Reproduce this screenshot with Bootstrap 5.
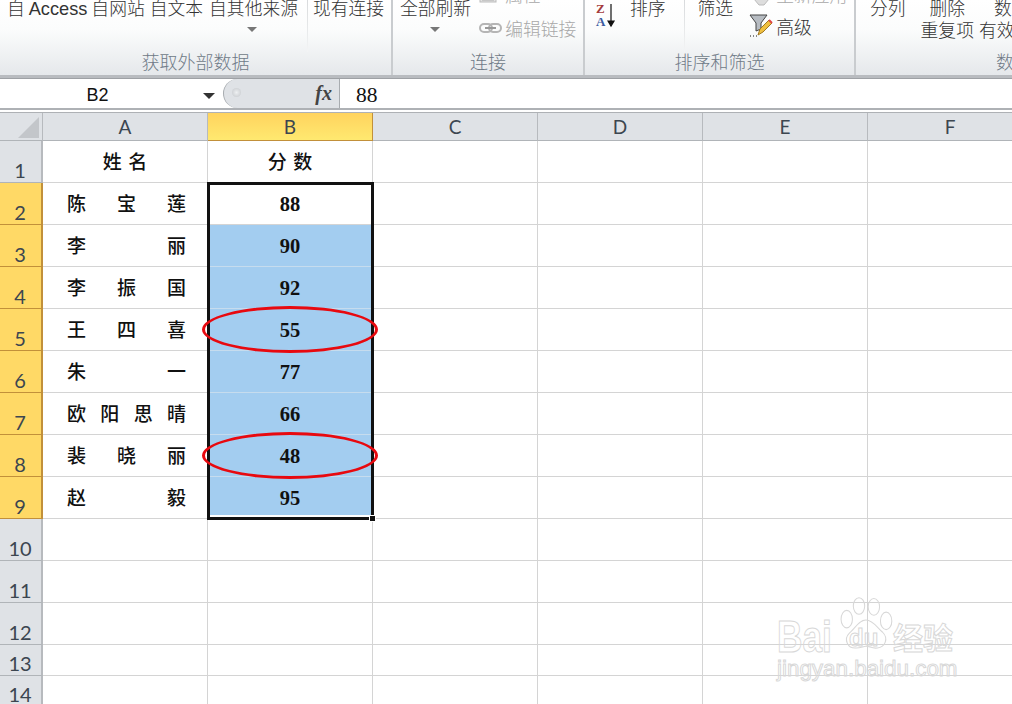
<!DOCTYPE html>
<html lang="zh"><head><meta charset="utf-8"><title>Excel</title>
<link href="https://cdn.jsdelivr.net/npm/bootstrap@5.3.0/dist/css/bootstrap.min.css" rel="stylesheet">
<style>
html,body{width:1012px;height:704px;overflow:hidden;background:#fff}
body{font-family:"Noto Sans CJK SC","Liberation Sans",sans-serif;position:relative;color:#222}
.ribbon{height:75px;overflow:hidden;background:linear-gradient(#fff 0,#fbfcfc 30px,#e5e8eb 75px)}
.rgroup{height:75px;border-right:2px solid #c9cccf;flex:none;position:relative}
.g1{width:393px}.g2{width:192px}.g3{width:271px}
.rbody{height:54px;margin-top:-5px;font-size:17.8px;line-height:24px;color:#333;font-weight:300}
.rlabel{font-size:18px;line-height:24px;color:#6f7a87;text-align:center;font-weight:300}
.rsep{width:1px;height:52px;margin-top:5px;background:linear-gradient(#d8dadc,#f3f4f5);flex:none}
.ritem{white-space:nowrap;flex:none}
.rdis{color:#a8a8a8}
.latin{font-family:"Liberation Sans",sans-serif;font-size:18.2px}
.caret-s{width:0;height:0;border-left:5px solid transparent;border-right:5px solid transparent;border-top:5px solid #777;display:block}
.stack2{margin-top:-13px}
.stack3{padding-top:1px;line-height:22px}
.line-up{height:34px}
.line-sm{height:22px}
.band{height:4px;background:#b9bcc0;border-bottom:1px solid #9ea1a5}
.fbar{height:29px;background:#fff}
.namebox{width:223px;position:relative;text-align:center;padding-right:28px;font-family:"Liberation Sans",sans-serif;font-size:18px;line-height:33px;color:#111}
.namecaret{position:absolute;right:8px;top:14px;border-left:6px solid transparent;border-right:6px solid transparent;border-top:6px solid #333}
.fxpill{width:117px;background:#dfe2e6;border:solid #a8acb0;border-width:0 1px 0 1px;border-radius:15px 0 0 15px;position:relative}
.fxdot{position:absolute;left:8px;top:9px;width:9px;height:9px;border-radius:50%;background:radial-gradient(#eef0f2,#c3c6ca)}
.fxtxt{position:absolute;right:7px;top:0;font-family:"Liberation Serif",serif;font-style:italic;font-weight:700;font-size:20px;line-height:29px;color:#444}
.fval{padding-left:16px;font-family:"Liberation Serif",serif;font-size:21.5px;line-height:32px;color:#111}
.band2{height:5px;background:linear-gradient(#aeb1b5 0,#aeb1b5 2px,#fff 2px,#fff 4px,#aeb1b5 4px)}
.sheet{display:grid;grid-template-columns:43px repeat(6,165px);grid-template-rows:28px repeat(12,42px) 31px 31px;position:relative;height:592px;overflow:hidden;width:1012px}
.hc{background:#dfe2e6;border-right:1px solid #b7babe;border-bottom:1px solid #b0b4b8;font-family:Lato,"Liberation Sans",sans-serif;font-size:19px;line-height:27px;text-align:center;color:#3c4650}
.hsel{background:linear-gradient(#ffd35e,#ffe970);border-right:1px solid #c2903a;border-bottom:1px solid #c2903a}
.rh{background:#dfe2e6;border-right:2px solid #b7babe;border-bottom:1px solid #b0b4b8;font-family:Lato,"Liberation Sans",sans-serif;font-size:20px;color:#3c4650;display:flex;align-items:flex-end;justify-content:center;line-height:24px;padding-right:1px}
.rhs{background:#ffd966;border-right-color:#c2903a;border-bottom-color:#c2903a}
.gc{border-right:1px solid #d4d4d4;border-bottom:1px solid #d4d4d4;background:#fff;min-width:0}
.tc{font-family:"Liberation Serif","Noto Sans CJK SC",serif;font-size:19px;color:#111;display:flex;align-items:center;line-height:1;padding-top:2px}
.nm{padding-left:24px;padding-right:21px;justify-content:space-between;font-weight:500}
.hd{justify-content:center;letter-spacing:6.5px;padding-left:6.5px;font-weight:500}
.sc{justify-content:center;font-size:20.5px;font-weight:700}
.blue{background:#a3cdf0;border-bottom-color:#c6dcee}
.blue-last{background:linear-gradient(#a3cdf0 0,#a3cdf0 38px,#fff 38px)}
.corner{width:0;height:0;border-left:21px solid transparent;border-bottom:21px solid #c3c6ca;position:absolute;left:18px;top:4px}
.selbox{position:absolute;left:207px;top:69px;width:167px;height:338px;border:3px solid #111}
.handle{position:absolute;left:369px;top:515px;width:7px;height:7px;background:#111;border:1px solid #fff}
.oval{position:absolute;left:202px;width:176px;height:47px;border:3px solid #e8090f;border-radius:50%}
.wm{position:absolute;left:770px;top:590px;width:195px;height:100px}
.wmt{position:absolute;color:transparent;-webkit-text-stroke:1px #d8d8d8;font-family:"Liberation Sans",sans-serif;font-weight:700;white-space:nowrap;line-height:1}
.wbai{left:7px;top:29px;font-size:44px;line-height:.8;transform:scaleX(.8);transform-origin:left}
.wdu{left:79px;top:36px;font-size:24px}
.wjing{left:7px;top:68px;font-size:22.4px;font-weight:400}
.wcn{left:123px;top:31px;font-size:30px;font-family:"Noto Sans CJK SC",sans-serif}
.wpaw{position:absolute;left:68px;top:4px}
</style></head><body>
<div class="ribbon d-flex">
  <div class="rgroup g1">
    <div class="rbody d-flex">
      <span class="ritem" style="margin-left:7px">自 <span class="latin">Access</span></span><span class="ritem" style="margin-left:4px">自网站</span><span class="ritem" style="margin-left:5px">自文本</span>
      <div class="ritem" style="margin-left:6px"><div>自其他来源</div><span class="caret-s" style="margin:8px 0 0 38px"></span></div>
      <div class="rsep" style="margin-left:9px"></div>
      <span class="ritem" style="margin-left:5px">现有连接</span>
    </div>
    <div class="rlabel">获取外部数据</div>
  </div>
  <div class="rgroup g2">
    <div class="rbody d-flex">
      <div class="ritem" style="margin-left:7px"><div>全部刷新</div><span class="caret-s" style="margin:8px 0 0 30px"></span></div>
      <div class="ritem stack2" style="margin-left:8px">
        <div class="d-flex align-items-end rdis line-up"><svg width="18" height="18" style="margin:0 8px 9px 0" viewBox="0 0 18 18"><rect x="1" y="0" width="16" height="13" fill="#e4e4e4" stroke="#bbb"/><path d="M3 11h12" stroke="#aaa"/></svg><span style="margin-bottom:10px">属性</span></div>
        <div class="d-flex align-items-center rdis"><svg width="23" height="12" style="margin-right:3px" viewBox="0 0 23 12"><rect x="1" y="2" width="12" height="8" rx="4" fill="none" stroke="#b5b5b5" stroke-width="2"/><rect x="10" y="2" width="12" height="8" rx="4" fill="none" stroke="#b5b5b5" stroke-width="2"/><path d="M6 6h11" stroke="#999" stroke-width="2"/></svg>编辑链接</div>
      </div>
    </div>
    <div class="rlabel">连接</div>
  </div>
  <div class="rgroup g3">
    <div class="rbody d-flex">
      <svg class="ritem" width="22" height="30" viewBox="0 0 22 30" style="margin:8px 0 0 10px"><text x="1" y="10" font-family="Liberation Serif" font-weight="700" font-size="13" fill="#a43c3c">Z</text><text x="1" y="23" font-family="Liberation Serif" font-weight="700" font-size="13" fill="#3a5aa0">A</text><path d="M16 1v18M13 18l3 5 3-5z" stroke="#111" stroke-width="1.2" fill="#111"/></svg>
      <span class="ritem" style="margin-left:13px">排序</span>
      <div class="rsep" style="margin-left:18px"></div>
      <span class="ritem" style="margin-left:13px">筛选</span>
      <div class="ritem stack2" style="margin-left:32px">
        <div class="rdis d-flex align-items-end line-up"><svg width="17" height="10" style="margin:0 6px 9px -12px" viewBox="0 0 17 10"><path d="M1 2h15l-5 6h-5z" fill="#ddd" stroke="#bbb"/></svg><span style="margin-bottom:10px">重新应用</span></div>
        <div class="d-flex align-items-center" style="margin-top:-2px"><svg width="25" height="24" viewBox="0 0 25 24" style="margin:0 2px 0 -16px"><path d="M1 1h17l-6 8v6l-5 2V9z" fill="#b7bcc2" stroke="#444"/><path d="M9 21l2-6 9-9 3 3-9 9z" fill="#f0c040" stroke="#a07820"/><path d="M20 6l3 3" stroke="#d44" stroke-width="2"/><path d="M1 22h1M4 22h1M7 22h1" stroke="#111"/></svg>高级</div>
      </div>
    </div>
    <div class="rlabel">排序和筛选</div>
  </div>
  <div class="flex-grow-1">
    <div class="rbody d-flex">
      <div class="ritem" style="margin-left:14px">分列</div>
      <div class="ritem text-center stack3" style="margin-left:15px"><div class="line-sm">删除</div><div>重复项</div></div>
      <div class="ritem stack3" style="margin-left:5px"><div class="line-sm" style="padding-left:15px">数</div><div>有效</div></div>
    </div>
    <div class="rlabel text-start" style="padding-left:140px">数</div>
  </div>
</div>
<div class="band"></div>
<div class="fbar d-flex">
  <div class="namebox">B2<span class="namecaret"></span></div>
  <div class="fxpill"><span class="fxdot"></span><span class="fxtxt">fx</span></div>
  <div class="fval">88</div>
</div>
<div class="band2"></div>
<div class="sheet">
  <div class="hc position-relative"><span class="corner"></span></div><div class="hc">A</div><div class="hc hsel">B</div><div class="hc">C</div><div class="hc">D</div><div class="hc">E</div><div class="hc">F</div>
  <div class="rh">1</div><div class="gc tc hd">姓名</div><div class="gc tc hd">分数</div><div class="gc"></div><div class="gc"></div><div class="gc"></div><div class="gc"></div>
  <div class="rh rhs">2</div><div class="gc tc nm"><span>陈</span><span>宝</span><span>莲</span></div><div class="gc tc sc">88</div><div class="gc"></div><div class="gc"></div><div class="gc"></div><div class="gc"></div>
  <div class="rh rhs">3</div><div class="gc tc nm"><span>李</span><span>丽</span></div><div class="gc tc sc blue">90</div><div class="gc"></div><div class="gc"></div><div class="gc"></div><div class="gc"></div>
  <div class="rh rhs">4</div><div class="gc tc nm"><span>李</span><span>振</span><span>国</span></div><div class="gc tc sc blue">92</div><div class="gc"></div><div class="gc"></div><div class="gc"></div><div class="gc"></div>
  <div class="rh rhs">5</div><div class="gc tc nm"><span>王</span><span>四</span><span>喜</span></div><div class="gc tc sc blue">55</div><div class="gc"></div><div class="gc"></div><div class="gc"></div><div class="gc"></div>
  <div class="rh rhs">6</div><div class="gc tc nm"><span>朱</span><span>一</span></div><div class="gc tc sc blue">77</div><div class="gc"></div><div class="gc"></div><div class="gc"></div><div class="gc"></div>
  <div class="rh rhs">7</div><div class="gc tc nm"><span>欧</span><span>阳</span><span>思</span><span>晴</span></div><div class="gc tc sc blue">66</div><div class="gc"></div><div class="gc"></div><div class="gc"></div><div class="gc"></div>
  <div class="rh rhs">8</div><div class="gc tc nm"><span>裴</span><span>晓</span><span>丽</span></div><div class="gc tc sc blue">48</div><div class="gc"></div><div class="gc"></div><div class="gc"></div><div class="gc"></div>
  <div class="rh rhs">9</div><div class="gc tc nm"><span>赵</span><span>毅</span></div><div class="gc tc sc blue-last">95</div><div class="gc"></div><div class="gc"></div><div class="gc"></div><div class="gc"></div>
  <div class="rh">10</div><div class="gc"></div><div class="gc"></div><div class="gc"></div><div class="gc"></div><div class="gc"></div><div class="gc"></div>
  <div class="rh">11</div><div class="gc"></div><div class="gc"></div><div class="gc"></div><div class="gc"></div><div class="gc"></div><div class="gc"></div>
  <div class="rh">12</div><div class="gc"></div><div class="gc"></div><div class="gc"></div><div class="gc"></div><div class="gc"></div><div class="gc"></div>
  <div class="rh">13</div><div class="gc"></div><div class="gc"></div><div class="gc"></div><div class="gc"></div><div class="gc"></div><div class="gc"></div>
  <div class="rh">14</div><div class="gc"></div><div class="gc"></div><div class="gc"></div><div class="gc"></div><div class="gc"></div><div class="gc"></div>
  <div class="selbox"></div>
</div>
<div class="handle"></div>
<div class="oval" style="top:306px"></div>
<div class="oval" style="top:432px"></div>
<div class="wm">
  <span class="wmt wbai">Bai</span>
  <svg class="wpaw" width="56" height="59" viewBox="0 0 64 66" fill="none" stroke="#d8d8d8" stroke-width="1.2"><ellipse cx="24" cy="13" rx="6.5" ry="9.5"/><ellipse cx="41" cy="14" rx="6.5" ry="9.5"/><ellipse cx="10" cy="28" rx="6.5" ry="10"/><ellipse cx="55" cy="30" rx="6.5" ry="10"/><path d="M32 29c-8 0-12 9-19 15-7 7-2 18 8 17 5 0 8-2 11-2 4 0 7 3 13 2 9-1 13-11 6-18-6-5-11-14-19-14z"/></svg>
  <span class="wmt wdu">du</span>
  <span class="wmt wcn">经验</span>
  <span class="wmt wjing">jingyan.baidu.com</span>
</div>
</body></html>
